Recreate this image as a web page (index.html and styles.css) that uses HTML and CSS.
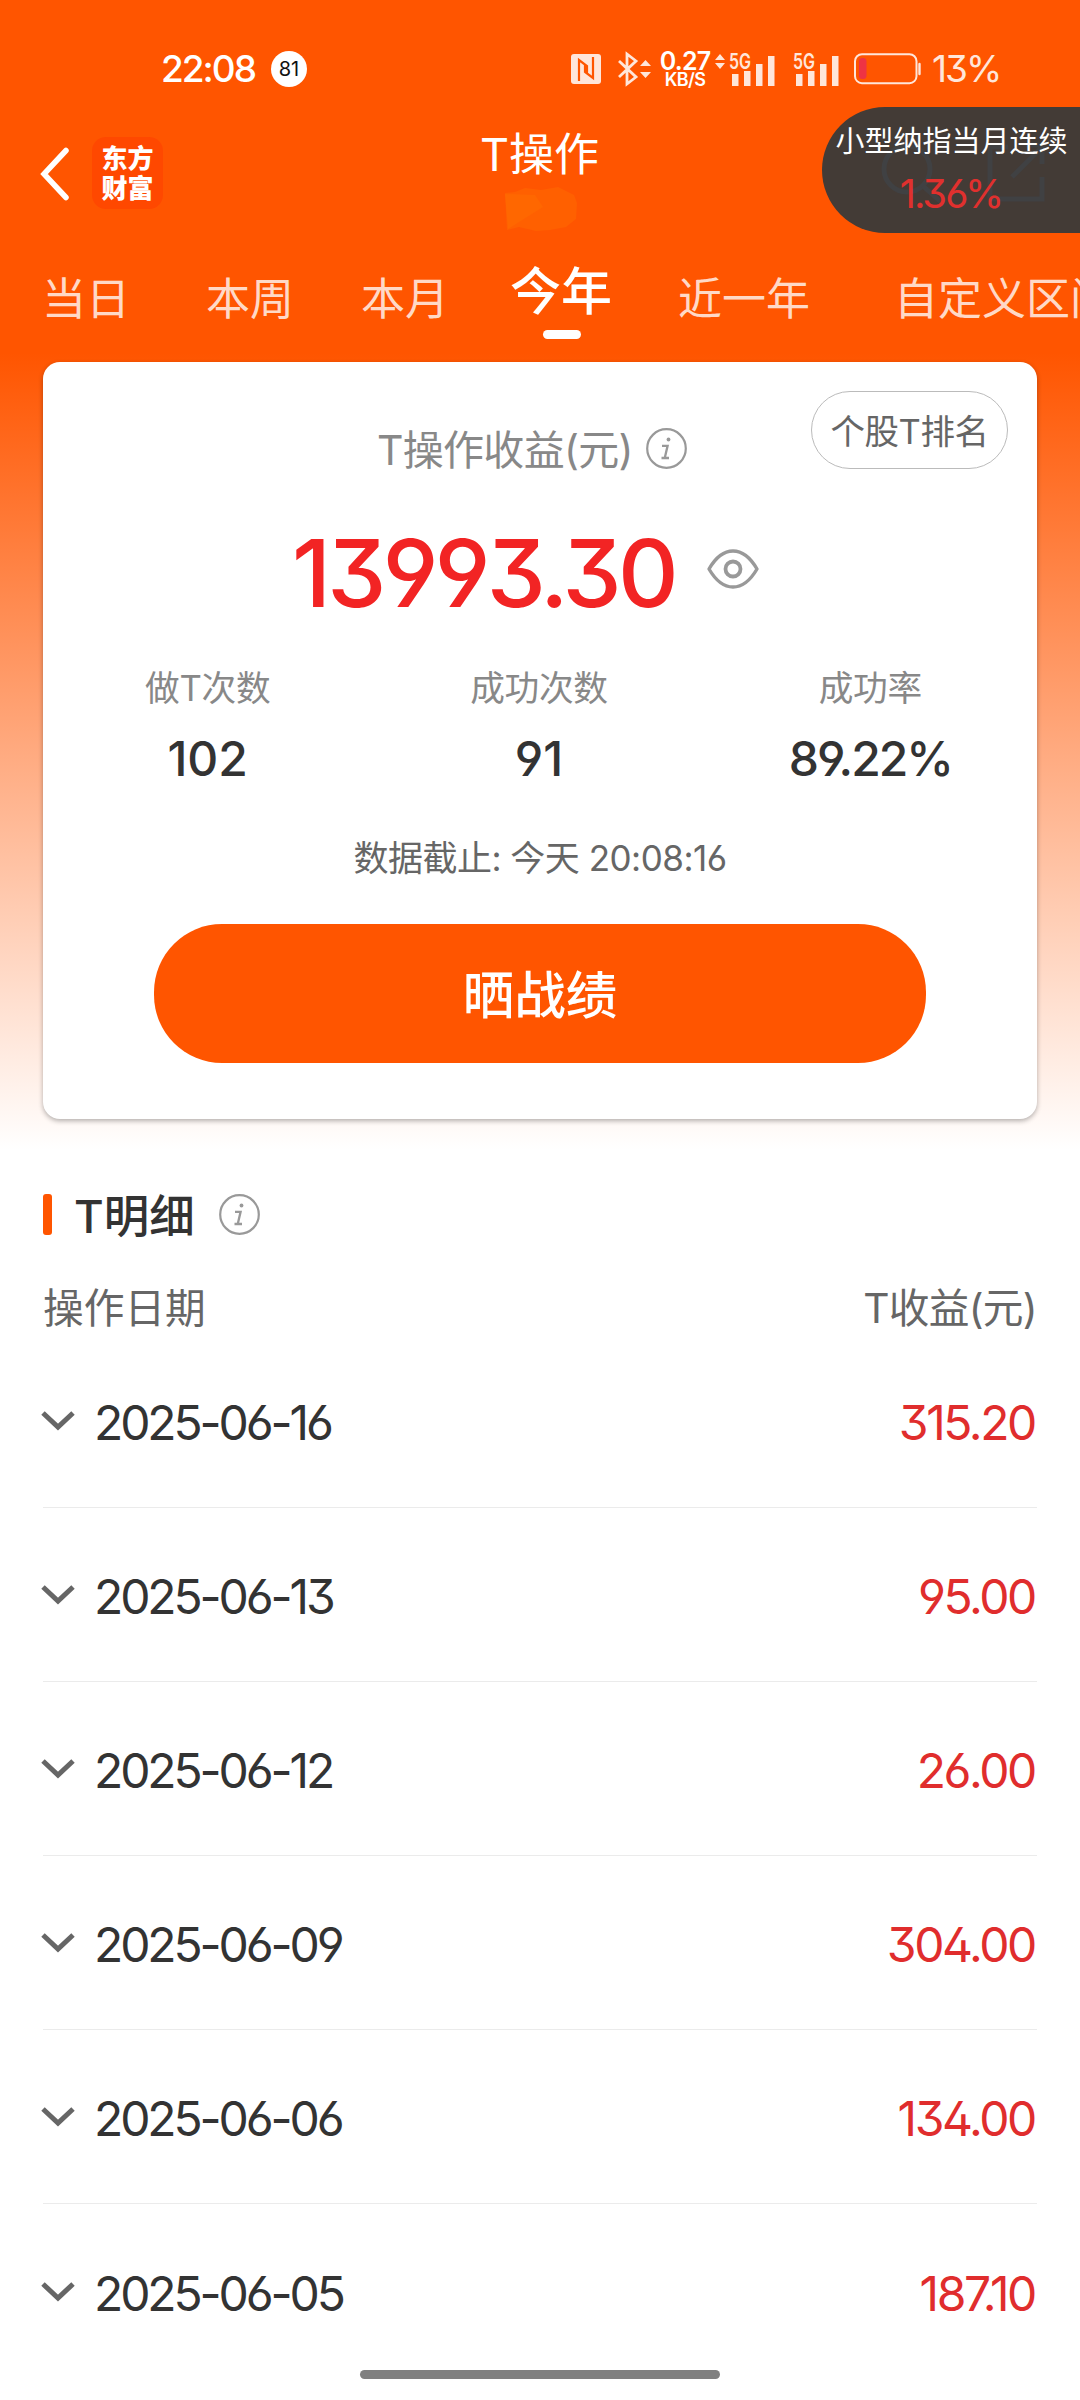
FILE: index.html
```html
<!DOCTYPE html>
<html lang="zh-CN">
<head>
    <meta charset="UTF-8">
    <meta name="viewport" content="width=device-width, initial-scale=1.0">
    <title>T操作</title>
    <link rel="stylesheet" href="styles.css">
</head>
<body>
    <div class="status-bar">
        <span class="time">22:08</span>
        <span class="badge">81</span>
        <div class="status-icons">
            <svg class="nfc" width="30" height="30" viewBox="0 0 30 30">
                <rect width="30" height="30" rx="3" fill="#ffe6da"/>
                <path d="M8 27V6l8 6v7M22 3v21l-8-6v-7" fill="none" stroke="#ff5500" stroke-width="2.200"/>
            </svg>
            <svg class="bluetooth" width="34" height="34" viewBox="0 0 34 34">
                <path d="M2 9l17 16-9 7V2l9 7L2 25" fill="none" stroke="#ffe6da" stroke-width="2.8"/>
                <path d="M23 14l5.500-6 5.500 6zM23 20l5.500 6 5.500-6z" fill="#ffe6da"/>
            </svg>
            <div class="speed">
                <b>0.27</b>
                <small>KB/S</small>
            </div>
            <svg class="signal" width="62" height="34" viewBox="0 0 62 34">
                <path d="M1 8l5-6 5 6zM1 11l5 6 5-6z" fill="#ffe6da"/>
                <text x="15" y="17" class="net" textLength="22" lengthAdjust="spacingAndGlyphs">5G</text>
                <path d="M18 22h6.500v12H18zM30 19h6.500v15H30zM42 12h6.500v22H42zM54 4h6.500v30H54z" fill="#ffe6da"/>
            </svg>
            <svg class="signal second" width="48" height="34" viewBox="14 0 48 34">
                <text x="15" y="17" class="net" textLength="22" lengthAdjust="spacingAndGlyphs">5G</text>
                <path d="M18 22h6.500v12H18zM30 19h6.500v15H30zM42 12h6.500v22H42zM54 4h6.500v30H54z" fill="#ffe6da"/>
            </svg>
            <svg class="battery" width="68" height="32" viewBox="0 0 68 32">
                <rect x="1" y="1.200" width="61.500" height="29" rx="7" fill="none" stroke="#ffe6da" stroke-width="2"/>
                <rect x="5" y="5" width="7.500" height="21" rx="3.500" fill="#ee3344"/>
                <path d="M65.500 11v10" stroke="#ffe6da" stroke-width="2.400" stroke-linecap="round"/>
            </svg>
            <span class="percent">13%</span>
        </div>
    </div>

    <header class="header">
        <svg class="back" width="32" height="56" viewBox="0 0 32 56">
            <path d="M28 4.500L6 28l22 23.500" fill="none" stroke="#fff" stroke-width="5.500" stroke-linecap="round" stroke-linejoin="miter"/>
        </svg>
        <div class="logo">东方<br>财富</div>
        <div class="title">
            <h1>T操作</h1>
            <svg class="smudge" width="72" height="44" viewBox="0 0 72 44">
                <path d="M0 6l10-1 10-4 16 2 17-3 16 8 3 8-1 16-10 8-16 3-14 1-17-4-12 3z" fill="#ff6000"/>
                <path d="M0 7l30 1 8 12-16 10L3 42z" fill="#ff6700"/>
            </svg>
        </div>
    </header>

    <!-- floating quote bubble -->
    <div class="floating">
        <svg class="ghost" width="258" height="126" viewBox="0 0 258 126">
            <g fill="none" stroke="#404143" stroke-width="5">
                <circle cx="85" cy="62" r="23"/>
                <path d="M101 79l19 17M186 40h-18v52h52V70M190 70l32-32M204 38h16v19"/>
            </g>
        </svg>
        <span class="floating-name">小型纳指当月连续</span>
        <span class="floating-value">1.36%</span>
    </div>

    <nav class="tabs">
        <a>当日</a>
        <a>本周</a>
        <a>本月</a>
        <a class="active">今年</a>
        <a>近一年</a>
        <a>自定义区间</a>
    </nav>

    <main>
        <section class="card">
            <button class="rank">个股T排名</button>
            <div class="card-title">
                <span>T操作收益(元)</span>
                <svg class="info" width="41" height="41" viewBox="0 0 41 41">
                    <circle cx="20.500" cy="20.500" r="19.300" fill="none" stroke="#999" stroke-width="2.200"/>
                    <circle cx="22.500" cy="11.500" r="1.900" fill="#999"/>
                    <path d="M16 17.800h5.600l-2.800 12M15.500 30h7.500" fill="none" stroke="#999" stroke-width="2.300"/>
                </svg>
            </div>
            <div class="amount">
                <span>13993.30</span>
                <svg width="52" height="40" viewBox="0 0 52 40">
                    <path d="M2 20C9 8 17 2 26 2s17 6 24 18c-7 12-15 18-24 18S9 32 2 20z" fill="none" stroke="#999" stroke-width="3.400" stroke-linejoin="round"/>
                    <circle cx="26" cy="20" r="7.500" fill="none" stroke="#999" stroke-width="3.800"/>
                </svg>
            </div>
            <div class="stats">
                <div class="stat"><span>做T次数</span><strong>102</strong></div>
                <div class="stat"><span>成功次数</span><strong>91</strong></div>
                <div class="stat"><span>成功率</span><strong class="rate">89.22%</strong></div>
            </div>
            <p class="deadline">数据截止: 今天 20:08:16</p>
            <button class="share">晒战绩</button>
        </section>

        <section class="details">
            <div class="details-title">
                <h2>T明细</h2>
                <svg class="info" width="41" height="41" viewBox="0 0 41 41">
                    <circle cx="20.500" cy="20.500" r="19.300" fill="none" stroke="#999" stroke-width="2.200"/>
                    <circle cx="22.500" cy="11.500" r="1.900" fill="#999"/>
                    <path d="M16 17.800h5.600l-2.800 12M15.500 30h7.500" fill="none" stroke="#999" stroke-width="2.300"/>
                </svg>
            </div>
            <div class="details-head">
                <span>操作日期</span>
                <span>T收益(元)</span>
            </div>
            <ul id="list"></ul>
        </section>
    </main>

    <div class="home-bar"></div>

    <script>
        const records = [
            ['2025-06-16', '315.20'],
            ['2025-06-13', '95.00'],
            ['2025-06-12', '26.00'],
            ['2025-06-09', '304.00'],
            ['2025-06-06', '134.00'],
            ['2025-06-05', '187.10']
        ];

        document.getElementById('list').innerHTML = records.map(([date, profit]) => `
            <li>
                <svg width="34" height="22" viewBox="0 0 34 22">
                    <path d="M2 3l15 14L32 3" fill="none" stroke="#666" stroke-width="5"/>
                </svg>
                <span class="date">${date}</span>
                <span class="profit">${profit}</span>
            </li>`).join('');
    </script>
</body>
</html>
```
FILE: styles.css
```css
* {
    box-sizing: border-box;
}

body {
    position: relative;
    width: 1080px;
    height: 2400px;
    margin: 0;
    overflow: hidden;
    font-family: Inter, "Noto Sans CJK SC", sans-serif;
    font-feature-settings: "cv03", "cv04", "cv09", "ss01";
    color: #333;
    background: linear-gradient(#ff5500 353px, #fff 1150px);
}

h1, h2, p, ul {
    margin: 0;
    padding: 0;
}

svg {
    flex: none;
    display: block;
    overflow: visible;
}

button {
    padding: 0;
    font-family: inherit;
    cursor: pointer;
}

/* Status bar */
.status-bar {
    display: flex;
    align-items: center;
    height: 107px;
    padding: 30px 80px 0 161px;
    color: #fff;
}

.time {
    width: 110px;
    font-size: 37px;
    font-weight: 500;
    letter-spacing: -2px;
}

.badge {
    width: 36px;
    height: 36px;
    border-radius: 50%;
    background: #fff;
    color: #111;
    font-size: 20px;
    line-height: 36px;
    text-align: center;
}

.status-icons {
    display: flex;
    align-items: center;
    margin-left: auto;
    color: #ffe6da;
}

.bluetooth {
    margin-left: 16px;
}

.speed {
    width: 52px;
    margin: 2px 3px 0 8px;
    color: #fff;
    text-align: center;
}

.speed b {
    display: block;
    font-size: 25px;
    font-weight: 600;
    line-height: 20px;
    letter-spacing: -0.8px;
}

.speed small {
    display: block;
    font-size: 18px;
    font-weight: 600;
    line-height: 18px;
    letter-spacing: -0.6px;
}

.net {
    fill: #ffe6da;
    font-size: 21px;
    font-weight: 600;
}

.signal.second {
    margin-left: 16px;
}

.battery {
    margin-left: 14px;
}

.percent {
    width: 68px;
    margin-left: 10px;
    font-size: 37px;
    line-height: 34px;
    letter-spacing: -2px;
}

/* Header */
.header {
    display: flex;
    align-items: flex-start;
    height: 151px;
    padding: 0 38px;
}

.back {
    margin-top: 39px;
}

.logo {
    width: 71px;
    height: 72px;
    margin: 30px 0 0 22px;
    padding-top: 7px;
    border-radius: 14px;
    background: #ff4800;
    color: #fff;
    font-size: 26px;
    font-weight: 900;
    line-height: 30px;
    text-align: center;
}

.title {
    width: 116px;
    margin: 23px 0 0 317px;
}

.title h1 {
    color: #fff;
    font-size: 45px;
    font-weight: 400;
    line-height: 50px;
    white-space: nowrap;
}

.smudge {
    margin: 7px 0 0 25px;
}

.floating {
    position: absolute;
    top: 107px;
    right: 0;
    width: 258px;
    height: 126px;
    border-radius: 63px 0 0 63px;
    background: #433b36;
    text-align: center;
}

.ghost {
    position: absolute;
    top: 0;
    left: 0;
}

.floating-name,
.floating-value {
    position: relative;
    display: block;
}

.floating-name {
    padding: 17px 0 0 1px;
    color: #fff;
    font-size: 29px;
    line-height: 36px;
    white-space: nowrap;
}

.floating-value {
    margin-top: 15px;
    color: #e0302e;
    font-size: 40px;
    line-height: 38px;
    letter-spacing: -2px;
}

/* Tabs */
.tabs {
    display: flex;
    align-items: center;
    height: 80px;
    padding: 2px 0 0 42px;
    color: #ffd9c7;
    font-size: 44px;
    line-height: 60px;
    white-space: nowrap;
}

.tabs a {
    margin-right: 67px;
}

.tabs a:first-child {
    margin-right: 76px;
}

.tabs a:nth-child(5) {
    margin-right: 84px;
}

.tabs .active {
    position: relative;
    top: -7px;
    margin-right: 66px;
    margin-left: -6px;
    color: #fff;
    font-size: 51px;
    font-weight: 500;
}

.tabs .active::after {
    content: "";
    position: absolute;
    bottom: -17px;
    left: 33px;
    width: 38px;
    height: 9px;
    border-radius: 5px;
    background: #fff;
}

/* Summary card */
.card {
    position: relative;
    height: 757px;
    margin: 24px 43px 0;
    padding-top: 59px;
    border-radius: 17px;
    background: #fff;
    box-shadow: 0 2px 5px rgba(0, 0, 0, 0.3);
}

.rank {
    position: absolute;
    top: 29px;
    right: 29px;
    width: 197px;
    height: 78px;
    padding-top: 2px;
    border: 1px solid #bbb;
    border-radius: 39px;
    background: #fff;
    color: #666;
    font-size: 34.5px;
    line-height: 76px;
    letter-spacing: -0.5px;
}

.card-title {
    display: flex;
    align-items: center;
    gap: 13px;
    height: 54px;
    padding-left: 334px;
    color: #888;
    font-size: 41px;
    letter-spacing: -0.7px;
}

.card-title span {
    margin-top: -2px;
}

.amount {
    display: flex;
    align-items: center;
    height: 110px;
    margin-top: 43px;
    padding-left: 249px;
    color: #f22424;
}

.amount span {
    width: 415px;
    font-size: 94px;
    font-weight: 500;
    line-height: 110px;
    letter-spacing: -3.7px;
}

.amount svg {
    margin-bottom: 8px;
}

.stats {
    display: grid;
    grid-template-columns: repeat(3, 1fr);
    margin: 36px 1px 0 -1px;
}

.stat {
    text-align: center;
}

.stat span {
    display: block;
    color: #888;
    font-size: 34.7px;
    line-height: 48px;
    letter-spacing: -0.3px;
}

.stat strong {
    display: block;
    margin-top: 17px;
    font-size: 48px;
    font-weight: 500;
    line-height: 60px;
}

.stat .rate {
    letter-spacing: -2px;
}

.deadline {
    margin-top: 45px;
    color: #666;
    font-size: 35px;
    line-height: 48px;
    letter-spacing: -0.5px;
    text-align: center;
}

.share {
    display: block;
    width: 772px;
    height: 139px;
    margin: 42px auto 0;
    padding-bottom: 4px;
    border: none;
    border-radius: 68px;
    background: #ff5500;
    color: #fff;
    font-size: 51.5px;
    font-weight: 500;
}

/* Detail list */
.details {
    margin: 0 43px;
}

.details-title {
    display: flex;
    align-items: center;
    height: 60px;
    margin-top: 65px;
}

.details-title::before {
    content: "";
    width: 9px;
    height: 41px;
    border-radius: 3px;
    background: #ff5500;
}

.details-title h2 {
    width: 145px;
    margin-left: 22px;
    padding-top: 6px;
    font-size: 45.5px;
    font-weight: 500;
    line-height: 54px;
    white-space: nowrap;
}

.details-head {
    display: flex;
    justify-content: space-between;
    margin-top: 35px;
    color: #666;
    font-size: 40.7px;
    line-height: 60px;
}

.details-head span:last-child {
    letter-spacing: -0.7px;
}

#list {
    list-style: none;
    margin-top: -5px;
}

#list li {
    display: flex;
    align-items: center;
    height: 174.1px;
    padding-top: 3px;
    border-bottom: 1px solid #ebebeb;
    font-size: 48px;
    font-weight: 370;
}

#list li:last-child {
    border-bottom: none;
}

#list svg {
    margin: 0 19px 3px -2px;
}

.date {
    letter-spacing: -3.1px;
}

.profit {
    margin-right: 2px;
    margin-left: auto;
    color: #e02d2d;
    letter-spacing: -2.4px;
}

.home-bar {
    position: absolute;
    bottom: 21px;
    left: 360px;
    width: 360px;
    height: 9px;
    border-radius: 5px;
    background: #808080;
}
```
